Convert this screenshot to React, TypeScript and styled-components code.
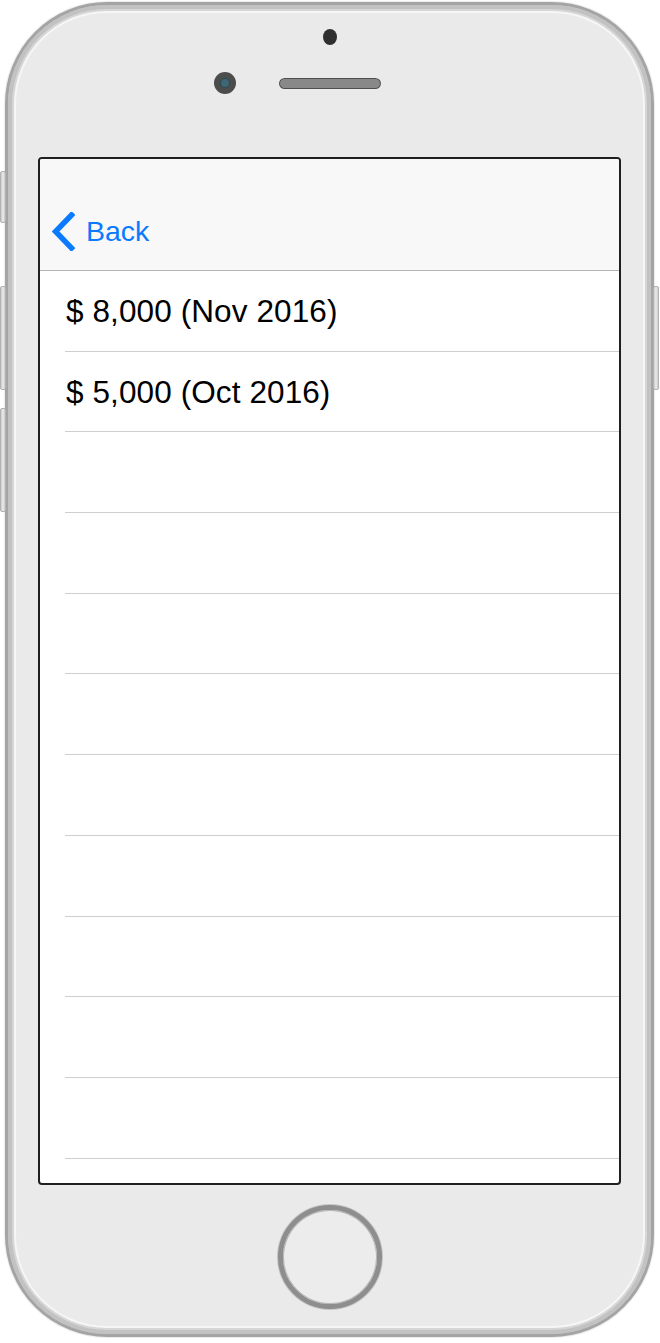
import React from "react";
import styled, { createGlobalStyle } from "styled-components";

const Global = createGlobalStyle`
  html, body { margin: 0; padding: 0; background: #ffffff; }
  body { font-family: "Liberation Sans", Arial, sans-serif; }
  * { box-sizing: border-box; }
`;

const Stage = styled.div`
  width: 660px;
  height: 1343px;
  padding: 2px 0 0 5px;
  overflow: hidden;
`;

const Phone = styled.div`
  position: relative;
  width: 649px;
  height: 1335px;
  border-radius: 102px;
  border: 3px solid #a4a4a4;
  background: #eaeaea;
  box-shadow: inset 0 0 0 4px #c2c2c2, inset 0 0 0 6px #d6d6d6, inset 0 0 0 8px #f6f6f6,
    0 0 1px 1px rgba(0, 0, 0, 0.08);
  display: flex;
  flex-direction: column;
  align-items: center;
`;

const SideButton = styled.div<{ $side: "left" | "right"; $top: number; $h: number }>`
  position: absolute;
  top: ${(p) => p.$top}px;
  height: ${(p) => p.$h}px;
  width: 6px;
  ${(p) => (p.$side === "left" ? "left: -8px;" : "right: -8px;")}
  border-radius: 2px;
  border: 1px solid #b2b2b2;
  background: linear-gradient(to right, #c9c9c9, #ececec, #c9c9c9);
`;

const TopArea = styled.div`
  height: 152px;
  width: 100%;
  display: flex;
  flex-direction: column;
  align-items: center;
  padding-top: 24px;
  gap: 27px;
`;

const Sensor = styled.div`
  width: 14px;
  height: 16px;
  border-radius: 50%;
  background: #2f2f2f;
`;

const CameraRow = styled.div`
  display: flex;
  align-items: center;
  gap: 43px;
`;

const Camera = styled.div`
  width: 22px;
  height: 22px;
  border-radius: 50%;
  background: #4c4c4c;
  display: flex;
  align-items: center;
  justify-content: center;
  &::after {
    content: "";
    width: 10px;
    height: 10px;
    border-radius: 50%;
    background: #3f6674;
    box-shadow: inset 0 0 0 1px #2d4650;
  }
`;

const Speaker = styled.div`
  width: 102px;
  height: 11px;
  border-radius: 6px;
  background-color: #5e5e5e;
  background-image: radial-gradient(#8a8a8a 0.7px, transparent 0.9px);
  background-size: 2px 2px;
  box-shadow: inset 0 0 0 1px #4e4e4e;
`;

const Spacer = styled.div`
  width: 22px;
  height: 22px;
`;

const Screen = styled.div`
  width: 583px;
  height: 1028px;
  border: 2px solid #1f1f1f;
  border-radius: 4px;
  background: #ffffff;
  overflow: hidden;
  display: flex;
  flex-direction: column;
  flex-shrink: 0;
`;

const NavBar = styled.div`
  height: 112px;
  flex-shrink: 0;
  background: #f8f8f8;
  border-bottom: 1px solid #b4b4b4;
  display: flex;
  align-items: flex-end;
`;

const NavContent = styled.div`
  height: 78px;
  width: 100%;
  display: flex;
  align-items: center;
  padding-left: 12px;
`;

const BackButton = styled.div`
  display: flex;
  align-items: center;
  gap: 11px;
  color: #0a7aff;
  font-size: 28.5px;
  font-family: "Liberation Sans", Arial, sans-serif;
  line-height: 1;
`;

const List = styled.div`
  display: flex;
  flex-direction: column;
`;

const Row = styled.div`
  height: 80.7px;
  flex-shrink: 0;
  margin-left: 25px;
  padding-left: 1px;
  padding-top: 2px;
  border-bottom: 1px solid #cfcfd3;
  display: flex;
  align-items: center;
  font-size: 31.5px;
  letter-spacing: 0.1px;
  color: #000000;
  font-family: "Liberation Sans", Arial, sans-serif;
`;

const BottomArea = styled.div`
  width: 100%;
  display: flex;
  justify-content: center;
  padding-top: 20px;
`;

const HomeButton = styled.div`
  width: 104px;
  height: 104px;
  border-radius: 50%;
  border: 5px solid #8e8e8e;
  background: #ececec;
  box-shadow: inset 0 0 0 1px #b8b8b8, 0 0 0 1px #c4c4c4;
`;

const rows = ["$ 8,000 (Nov 2016)", "$ 5,000 (Oct 2016)", "", "", "", "", "", "", "", "", "", ""];

export default function App() {
  return (
    <>
      <Global />
      <Stage>
        <Phone>
          <SideButton $side="left" $top={166} $h={52} />
          <SideButton $side="left" $top={281} $h={104} />
          <SideButton $side="left" $top={403} $h={104} />
          <SideButton $side="right" $top={281} $h={104} />
          <TopArea>
            <Sensor />
            <CameraRow>
              <Camera />
              <Speaker />
              <Spacer />
            </CameraRow>
          </TopArea>
          <Screen>
            <NavBar>
              <NavContent>
                <BackButton>
                  <svg width="23" height="39" viewBox="0 0 23 39">
                    <polyline
                      points="19.5,3 3.5,19.5 19.5,36"
                      fill="none"
                      stroke="#0a7aff"
                      strokeWidth="5.5"
                      strokeLinecap="square"
                      strokeLinejoin="miter"
                    />
                  </svg>
                  <span>Back</span>
                </BackButton>
              </NavContent>
            </NavBar>
            <List>
              {rows.map((r, i) => (
                <Row key={i}>{r}</Row>
              ))}
            </List>
          </Screen>
          <BottomArea>
            <HomeButton />
          </BottomArea>
        </Phone>
      </Stage>
    </>
  );
}
